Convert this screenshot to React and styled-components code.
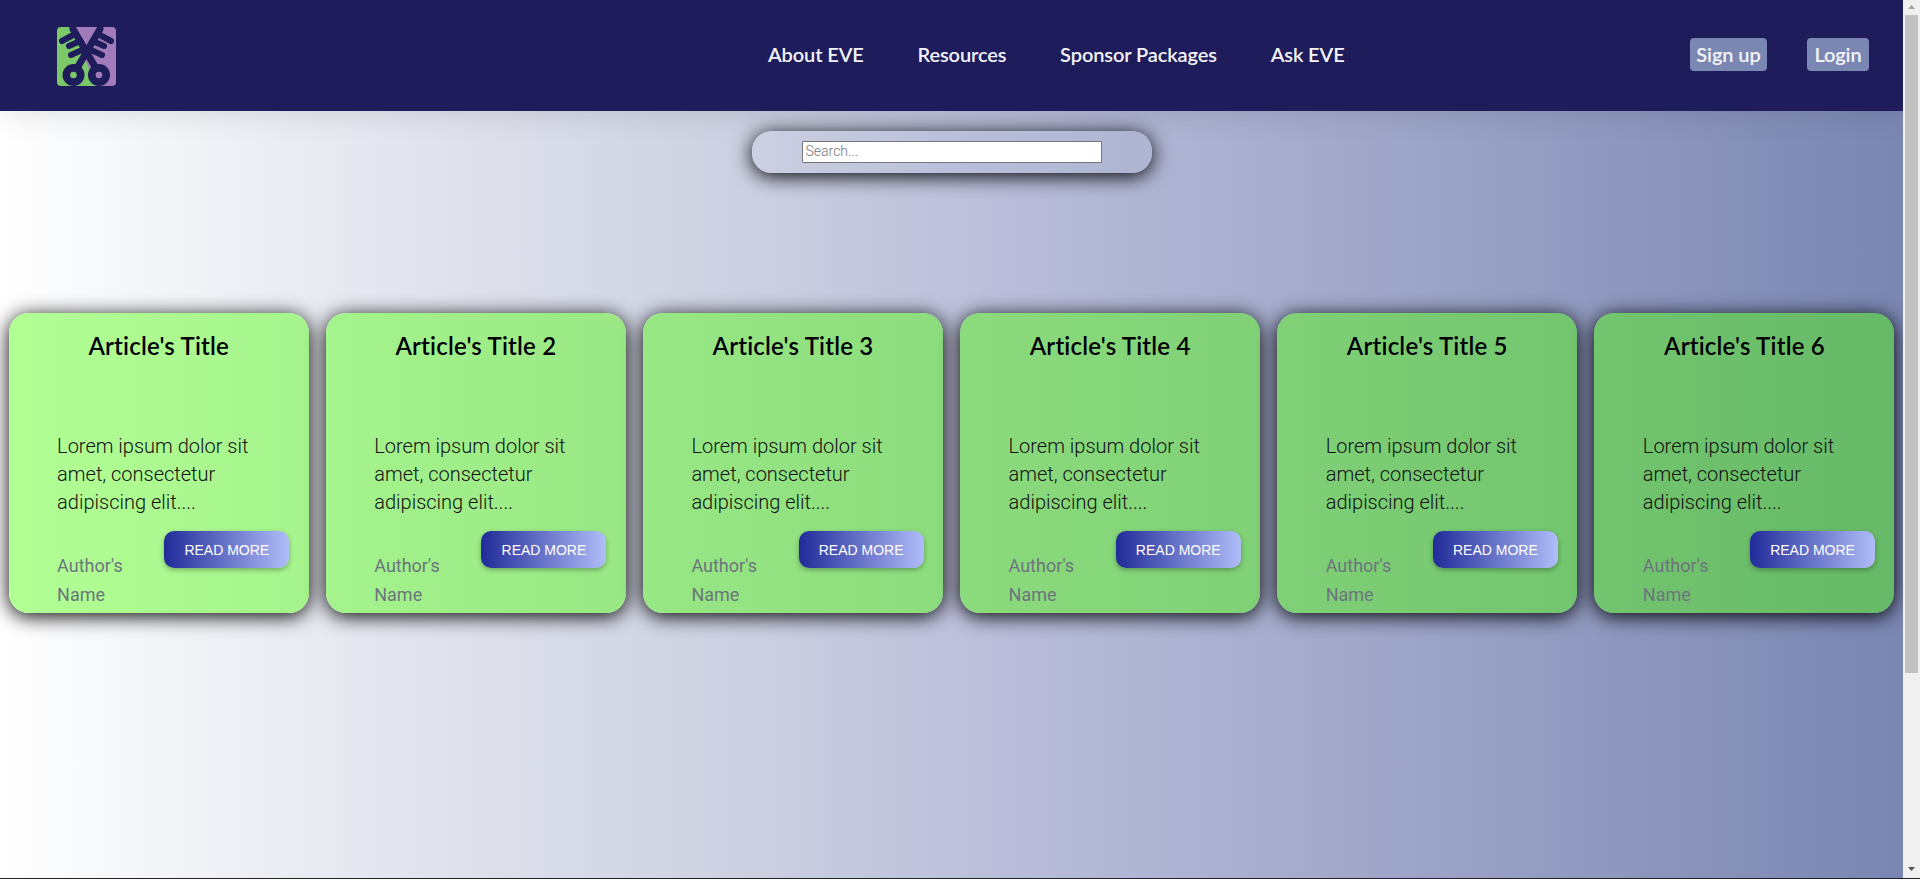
import React from "react";
import styled, { createGlobalStyle } from "styled-components";

const GlobalStyle = createGlobalStyle`
  * { box-sizing: border-box; }
  body { margin: 0; overflow: hidden; font-family: Roboto, sans-serif; }
`;

const Window = styled.div`
  display: flex;
  height: 879px;
  border-bottom: 1px solid #222226;
`;

const Page = styled.div`
  width: 1903px;
  flex: none;
  overflow: hidden;
  background: linear-gradient(to right, #ffffff, #e7eaf1 17%, #cbcfe0 40%, #b9bdd9 53%, #7a86b2);
`;

const Header = styled.header`
  display: flex;
  align-items: center;
  height: 111px;
  padding: 0 34px 2px 57px;
  background: #1e1c5b;
  box-shadow: 0 0 30px rgba(0, 0, 0, 0.13);
`;

const Logo = styled.svg`
  width: 59px;
  height: 59px;
  flex: none;
  margin-top: 4px;
`;

const Nav = styled.nav`
  display: flex;
  gap: 53.7px;
  margin-left: 652px;
`;

const NavLink = styled.a`
  color: #f4f4f8;
  font: 600 20px/33px Lato, sans-serif;
  letter-spacing: -0.1px;
  white-space: nowrap;
`;

const Account = styled.div`
  display: flex;
  gap: 40px;
  margin-left: auto;
`;

const AccountButton = styled.a`
  width: ${(p) => p.$width}px;
  border-radius: 4px;
  background: #7b87b3;
  color: #f4f4f8;
  text-align: center;
  font: 600 20px/33px Lato, sans-serif;
  letter-spacing: -0.1px;
`;

const SearchPill = styled.form`
  display: flex;
  align-items: center;
  justify-content: center;
  width: 400px;
  height: 42px;
  margin: 20px auto 0;
  border-radius: 20px;
  background: linear-gradient(to right, #cdd0e2, #b9bfda 52%, #adb5d2);
  box-shadow: 0 3px 20px rgba(0, 0, 0, 1);
`;

const SearchInput = styled.input`
  width: 300px;
  height: 22px;
  padding: 0 3px 2px;
  border: 1px solid #767676;
  border-radius: 1px;
  background: #fff;
  font: 300 14px Roboto, sans-serif;
  &::placeholder { color: #757575; }
`;

const Cards = styled.main`
  display: flex;
  justify-content: space-around;
  margin-top: 140px;
`;

const Card = styled.article`
  width: 300px;
  height: 300px;
  padding: 17px 19.3px 0 48.5px;
  border-radius: 20px;
  background: linear-gradient(to right, #b2ff94, #66b967) 0 0 / 1903px 100% fixed;
  box-shadow: 0 3px 20px rgba(0, 0, 0, 1);
`;

const Title = styled.h2`
  margin: 0 0 0 -29px;
  text-align: center;
  color: #000;
  font: 600 24px/32px Lato, sans-serif;
  letter-spacing: 0.2px;
`;

const Excerpt = styled.p`
  margin: 70px 0 0;
  color: #111;
  font: 300 20px/28px Roboto, sans-serif;
`;

const CardFooter = styled.footer`
  display: flex;
  justify-content: space-between;
  margin-top: 15px;
`;

const Author = styled.p`
  width: 80px;
  margin: 20px 0 0;
  color: #6c757d;
  font: 400 18px/29px Roboto, sans-serif;
`;

const ReadMore = styled.button`
  width: 125px;
  height: 37px;
  padding: 0;
  border: 0;
  border-radius: 10px;
  background: linear-gradient(to right, #212b99, #b0bdf8);
  box-shadow: 0 2px 5px rgba(0, 0, 0, 0.3);
  color: #fff;
  font: 400 14px "Liberation Sans", Arial, sans-serif;
`;

const Scrollbar = styled.div`
  display: flex;
  flex-direction: column;
  align-items: center;
  justify-content: space-between;
  width: 17px;
  padding: 5px 0 7px;
  background: #f0f0f0;
`;

const Thumb = styled.div`
  width: 13px;
  height: 658px;
  margin: 6px 0 auto;
  background: #c1c1c1;
`;

const Arrow = styled.svg`
  display: block;
  width: 7px;
  height: 4px;
`;

const navItems = ["About EVE", "Resources", "Sponsor Packages", "Ask EVE"];
const articles = ["", " 2", " 3", " 4", " 5", " 6"].map((n) => `Article's Title${n}`);

function Brand() {
  return (
    <Logo viewBox="0 0 59 59">
      <defs>
        <clipPath id="tile"><rect width="59" height="59" rx="4" /></clipPath>
      </defs>
      <g clipPath="url(#tile)">
        <path d="M0 0H18L29 31V59H0Z" fill="#7bc868" />
        <path d="M18 0H59V59H29V31Z" fill="#a27bba" />
        <path d="M29 34L20 59H39L29 34Z" fill="#7bc868" />
        <g fill="none" stroke="#1e1c5b" strokeWidth="7" strokeLinecap="round">
          <path d="M16 2L40 43M43 2L19 43" />
          <path d="M18 7L5 14M21 15L12 19M25 23L14 28M41 7L54 14M38 15L47 19M34 23L45 28" strokeWidth="6" />
        </g>
        <circle cx="16.5" cy="48" r="11" fill="#1e1c5b" />
        <circle cx="42" cy="48" r="11" fill="#1e1c5b" />
        <circle cx="16.5" cy="48" r="3.3" fill="#7bc868" />
        <circle cx="42" cy="48" r="3.3" fill="#a27bba" />
      </g>
    </Logo>
  );
}

export default function App() {
  return (
    <Window>
      <GlobalStyle />
      <Page>
        <Header>
          <Brand />
          <Nav>{navItems.map((n) => <NavLink key={n}>{n}</NavLink>)}</Nav>
          <Account>
            <AccountButton $width={77}>Sign up</AccountButton>
            <AccountButton $width={62}>Login</AccountButton>
          </Account>
        </Header>
        <SearchPill><SearchInput placeholder="Search..." /></SearchPill>
        <Cards>
          {articles.map((title) => (
            <Card key={title}>
              <Title>{title}</Title>
              <Excerpt>Lorem ipsum dolor sit amet, consectetur adipiscing elit....</Excerpt>
              <CardFooter>
                <Author>Author's Name</Author>
                <ReadMore>READ MORE</ReadMore>
              </CardFooter>
            </Card>
          ))}
        </Cards>
      </Page>
      <Scrollbar>
        <Arrow viewBox="0 0 7 4"><path d="M0 4L3.5 0L7 4Z" fill="#a3a3a3" /></Arrow>
        <Thumb />
        <Arrow viewBox="0 0 7 4"><path d="M0 0L3.5 4L7 0Z" fill="#505050" /></Arrow>
      </Scrollbar>
    </Window>
  );
}
